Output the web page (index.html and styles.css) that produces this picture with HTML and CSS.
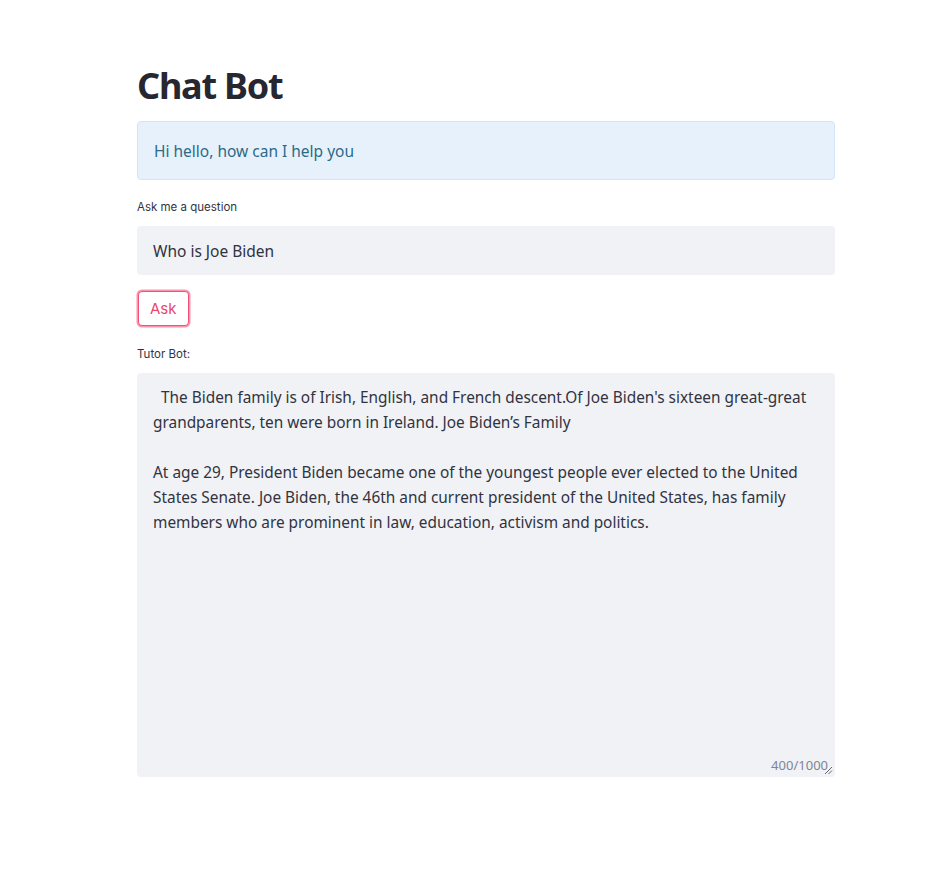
FILE: index.html
```html
<!DOCTYPE html>
<html lang="en">
<head>
<meta charset="utf-8">
<title>Chat Bot</title>
<link rel="stylesheet" href="styles.css">
</head>
<body>
<main class="app">
  <h1 class="title">Chat Bot</h1>
  <div class="info">Hi hello, how can I help you</div>
  <div class="field">
    <label class="label">Ask me a question</label>
    <div class="input">Who is Joe Biden</div>
  </div>
  <div class="btn-row"><button class="btn">Ask</button></div>
  <div class="field">
    <label class="label">Tutor Bot:</label>
    <div class="textarea">
      <div class="ta-text">&nbsp; The Biden family is of Irish, English, and French descent.Of Joe Biden's sixteen great-great
grandparents, ten were born in Ireland. Joe Biden’s Family

At age 29, President Biden became one of the youngest people ever elected to the United
States Senate. Joe Biden, the 46th and current president of the United States, has family
members who are prominent in law, education, activism and politics.</div>
      <span class="counter">400/1000</span>
      <svg class="grip" width="9" height="9" viewBox="0 0 9 9"><path d="M8 1 L1 8 M8 4.5 L4.5 8" stroke="#666" stroke-width="1" fill="none"/></svg>
    </div>
  </div>
</main>
</body>
</html>
```
FILE: styles.css
```css
html, body {
  margin: 0;
  padding: 0;
  background: #ffffff;
}
body {
  font-family: "Noto Sans", "Liberation Sans", sans-serif;
  color: #31333f;
}
.app {
  width: 698px;
  margin-left: 137px;
  padding-top: 62px;
  display: flex;
  flex-direction: column;
}
.title {
  margin: 0;
  font-size: 36px;
  line-height: 48px;
  font-weight: 700;
  color: #262730;
  letter-spacing: -1.2px;
}
.info {
  margin-top: 11px;
  height: 57px;
  box-sizing: content-box;
  border: 1px solid #d3e5f7;
  background: #e7f1fc;
  border-radius: 4px;
  padding: 0 16px;
  display: flex;
  align-items: center;
  font-size: 15.5px;
  color: #2d6a86;
}
.field {
  display: flex;
  flex-direction: column;
}
.label {
  margin-top: 20px;
  font-family: "Inter", "Noto Sans", sans-serif;
  font-size: 11.5px;
  line-height: 14px;
  color: #31333f;
  margin-bottom: 12px;
}
.input {
  height: 49px;
  background: #f0f2f6;
  border-radius: 4px;
  padding: 0 16px;
  display: flex;
  align-items: center;
  font-size: 15.5px;
  color: #31333f;
}
.btn-row {
  margin-top: 16px;
  display: flex;
}
.btn {
  margin-left: 1px;
  height: 35px;
  padding: 0 11px;
  background: #ffffff;
  border: 1px solid #f0527a;
  border-radius: 4px;
  box-shadow: 0 0 0 1.5px rgba(255, 120, 150, 0.8);
  font-family: "Inter", "Noto Sans", sans-serif;
  font-size: 15px;
  color: #e8486e;
}
.btn-row + .field .label {
  margin-top: 21px;
}
.textarea {
  position: relative;
  height: 404px;
  background: #f0f2f6;
  border-radius: 4px;
  box-sizing: border-box;
  padding: 12px 16px;
}
.ta-text {
  white-space: pre;
  font-size: 15.4px;
  line-height: 25px;
  color: #31333f;
}
.counter {
  position: absolute;
  right: 7px;
  bottom: 3px;
  font-size: 13px;
  color: #808495;
}
.grip {
  position: absolute;
  right: 2px;
  bottom: 2px;
}
```
